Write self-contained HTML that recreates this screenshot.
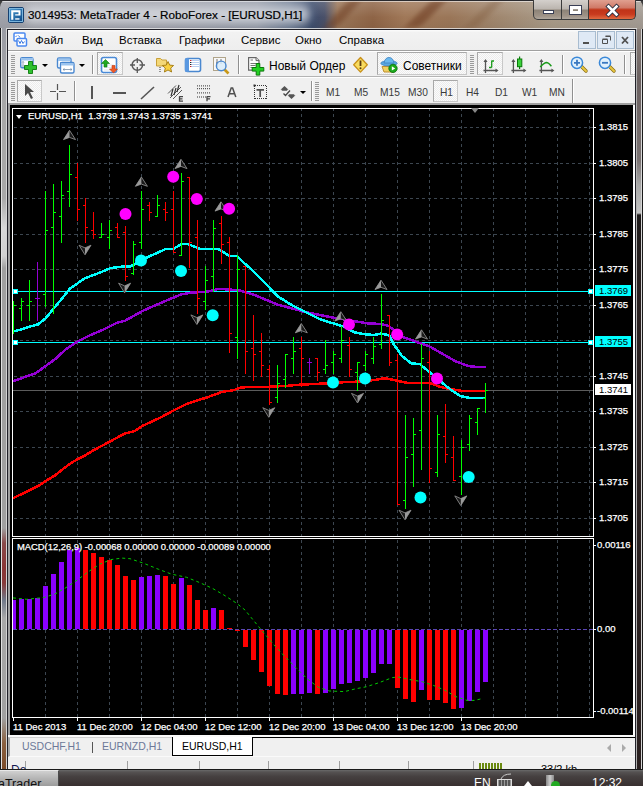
<!DOCTYPE html>
<html><head><meta charset="utf-8">
<style>
*{box-sizing:border-box}
html,body{margin:0;padding:0}
body{width:643px;height:786px;overflow:hidden;position:relative;background:#1a1a1a;font-family:"Liberation Sans",sans-serif;}
.a{position:absolute}
#title{left:0;top:0;width:643px;height:29px;border-radius:7px 7px 0 0;
 background:linear-gradient(90deg,#a0a2aa 0%,#9a9ca6 25%,#9096a4 40%,#6a7890 45%,#3c4c6c 48.5%,#4a5068 50.5%,#9a7658 52.5%,#8e6446 58%,#a07858 63%,#9a7658 70%,#a08870 78%,#a89a88 86%,#a49c94 100%);}
#title:after{content:"";position:absolute;left:0;top:0;right:0;bottom:0;background:linear-gradient(180deg,rgba(255,255,255,0.18),rgba(255,255,255,0) 60%,rgba(0,0,0,0.05));}
#glow{left:24px;top:6px;width:286px;height:17px;border-radius:8px;background:rgba(222,224,230,0.75);filter:blur(4px)}
#ttext{left:28px;top:7.5px;font-size:11.7px;color:#000;-webkit-text-stroke:0.2px #000;white-space:nowrap;}
#ficon{left:8px;top:7px;width:16px;height:16px;border-radius:2px;background:linear-gradient(180deg,#3a8ac0,#155080);border:1px solid #0c3a60}
.frame{background:linear-gradient(90deg,#2a2a2a 0,#8a8a8a 1px,#c4c4c4 3px,#9a9a9a 6px,#3a3a3a 7px)}
#client{left:7px;top:29px;width:629px;height:741px;background:#f0f0f0;border:1px solid #202028;border-bottom:none}
.caps{top:0;height:20px;border:1px solid #3b3b3b;border-top:none}
.menu{top:34px;margin-left:-1px;font-size:11.5px;color:#000;white-space:nowrap}
.tb{font-size:12px;color:#000;white-space:nowrap}
.tf{top:87px;font-size:10.2px;color:#3a3a3a;white-space:nowrap}
.sep{width:2px;background:#909090;border-right:1px solid #fff}
.grip{width:4px;background:repeating-linear-gradient(180deg,#9a9a9a 0,#9a9a9a 1px,transparent 1px,transparent 2px)}
.press{border:1px solid #c8c8c8;border-left-color:#a8a8a8;border-top-color:#a8a8a8;background:repeating-conic-gradient(#ececec 0 25%,#fbfbfb 0 50%) 0 0/2px 2px}
#chart{left:10px;top:105px;width:623px;height:630px;background:#000}
.pl{position:absolute;left:599px;font-size:9.5px;color:#fff;-webkit-text-stroke:0.25px #fff;line-height:12px;white-space:nowrap}
.plb{position:absolute;left:595px;width:36px;height:11px;font-size:9.5px;color:#000;line-height:11px;padding-left:4px;white-space:nowrap}
.tk{position:absolute;left:593px;width:3px;height:1px;background:#fff}
.dl{position:absolute;top:721px;font-size:9.5px;color:#fff;-webkit-text-stroke:0.25px #fff;line-height:12px;white-space:nowrap}
.dtk{position:absolute;top:717px;width:1px;height:4px;background:#fff}
.tab{top:740px;font-size:10.5px;white-space:nowrap}
</style></head><body>
<!-- title bar -->
<div class="a" id="title"></div>
<div class="a" style="left:336px;top:0;width:13px;height:28px;background:rgba(105,55,30,0.5);transform:skewX(-42deg);filter:blur(3px)"></div>
<div class="a" style="left:418px;top:0;width:15px;height:28px;background:rgba(105,55,30,0.55);transform:skewX(-45deg);filter:blur(3px)"></div>
<div class="a" style="left:478px;top:0;width:12px;height:28px;background:rgba(120,80,50,0.3);transform:skewX(-45deg);filter:blur(3px)"></div>
<div class="a" style="left:0;top:0;width:643px;height:1px;background:#2a2a2e"></div>
<div class="a" style="left:2px;top:1px;width:639px;height:1px;background:rgba(255,255,255,0.55)"></div>
<div class="a" style="left:6px;top:28px;width:631px;height:1px;background:rgba(235,235,235,0.8)"></div>
<div class="a" id="glow"></div>
<svg class="a" style="left:8px;top:7px" width="16" height="16"><rect x="0.5" y="0.5" width="15" height="15" rx="1.5" fill="#1e5a94" stroke="#164070"/><rect x="1.5" y="1.5" width="13" height="13" fill="none" stroke="#7ab4dc" stroke-width="1"/><rect x="2" y="2" width="12" height="12" fill="url(#fig)"/><defs><linearGradient id="fig" x1="0" y1="0" x2="1" y2="1"><stop offset="0" stop-color="#4a9ad0"/><stop offset="1" stop-color="#0e4a88"/></linearGradient></defs><path d="M3.2 3.2h9.3v5.2h-5.3v-1.2h3.3v-1.9h-5.2v7.5h-2.1z" fill="#fff"/><rect x="7.2" y="11.2" width="4.3" height="1.5" fill="#e8f0f8"/></svg>
<div class="a" id="ttext">3014953: MetaTrader 4 - RoboForex - [EURUSD,H1]</div>
<div class="a caps" style="left:533px;width:29px;border-radius:0 0 0 5px;background:linear-gradient(180deg,#d4d0cc,#bcb6b0 45%,#8e8478 55%,#a09488 85%,#b0a89e)"><div class="a" style="left:9px;top:10px;width:11px;height:4px;background:#fff;border:1px solid #3a3f55"></div></div>
<div class="a caps" style="left:561px;width:28px;background:linear-gradient(180deg,#d4d0cc,#bcb6b0 45%,#8e8478 55%,#a09488 85%,#b0a89e)"><div class="a" style="left:8px;top:6px;width:11px;height:8px;background:transparent;border:3px solid #fff;outline:1px solid #3a3f55"></div></div>
<div class="a caps" style="left:588px;width:48px;border-radius:0 0 5px 0;background:linear-gradient(180deg,#e0a090,#d07a68 40%,#c03418 52%,#c83a1e 75%,#e06a40)"><svg class="a" style="left:0;top:0" width="48" height="20"><path d="M19.5 6.5l8 8M27.5 6.5l-8 8" stroke="#2a3040" stroke-width="4.4" stroke-linecap="square"/><path d="M19.5 6.5l8 8M27.5 6.5l-8 8" stroke="#fff" stroke-width="2.6" stroke-linecap="square"/></svg></div>
<!-- frames -->
<div class="a" style="left:0;top:28px;width:7px;height:742px;background:#1a1a1a"></div>
<div class="a" style="left:1px;top:28px;width:1px;height:742px;background:#e0e0e0"></div>
<div class="a" style="left:2px;top:28px;width:4px;height:742px;background:linear-gradient(180deg,#9a9ca4 0,#a8a8a8 80px,#a8a8a8 170px,#d8d8d8 200px,#d0d0d0 228px,#a0a0a0 240px,#a0a0a0 500px,#8a4a4a 515px,#8a3636 540px,#883a3a 555px,#707888 572px,#a8a8a8 590px,#a0a0a0 690px,#8a6040 715px,#7a4a28 742px)"></div>
<div class="a" style="left:6px;top:28px;width:1px;height:742px;background:#d4d4d4"></div>
<div class="a" style="left:636px;top:29px;width:7px;height:741px;background:#1a1a1a"></div>
<div class="a" style="left:636px;top:29px;width:1px;height:741px;background:#b0b0b0"></div>
<div class="a" style="left:637px;top:29px;width:4px;height:741px;background:linear-gradient(180deg,#8a807a 0,#6a6060 51px,#7a7272 131px,#a8a8a8 156px,#c4c4c4 184px,#1e1a1a 186px,#2a2020 291px,#2a2020 741px)"></div>
<div class="a" style="left:641px;top:29px;width:1px;height:741px;background:#d8d8d8"></div>
<!-- client -->
<div class="a" id="client"></div>
<!-- menu -->
<div class="a" style="left:8px;top:30px;width:627px;height:20px;background:linear-gradient(180deg,#fafafa 0,#fafafa 1px,#f2f2f2 2px,#eeeeee)"></div>
<svg class="a" style="left:8px;top:29px" width="24" height="22"><rect x="6" y="4" width="11" height="8" rx="1" fill="#fff" stroke="#4a88f0" stroke-width="1.5"/><path d="M7.5 8l1.5-1.5M10.5 6.5l1.5 2" stroke="#3a78e0" stroke-width="1"/><rect x="9" y="9.5" width="9.5" height="7.5" rx="1" fill="#fff" stroke="#4a88f0" stroke-width="1.5"/><path d="M10.5 11.5l1.5 3 1.5-3 1.5 3 1.5-2" stroke="#3a78e0" stroke-width="1" fill="none"/></svg>
<div class="a menu" style="left:36px">Файл</div>
<div class="a menu" style="left:83px">Вид</div>
<div class="a menu" style="left:120px">Вставка</div>
<div class="a menu" style="left:180px">Графики</div>
<div class="a menu" style="left:242px">Сервис</div>
<div class="a menu" style="left:296px">Окно</div>
<div class="a menu" style="left:340px">Справка</div>
<div class="a" style="left:578px;top:31px;width:18px;height:18px;border:1px solid #a8bcd0;background:#dfe9f5"></div>
<div class="a" style="left:597px;top:31px;width:18px;height:18px;border:1px solid #a8bcd0;background:#dfe9f5"></div>
<div class="a" style="left:616px;top:31px;width:18px;height:18px;border:1px solid #a8bcd0;background:#dfe9f5"></div>
<svg class="a" style="left:578px;top:31px" width="56" height="18"><rect x="5" y="11" width="6" height="2" fill="#505050"/><path d="M27.5 5.5h5v4M24.5 8.5h5v4h-5z" stroke="#505050" stroke-width="1" fill="none"/><path d="M24.5 8h5M27.5 5h5" stroke="#505050" stroke-width="1"/><path d="M44 6l6 6.5M50 6l-6 6.5" stroke="#505050" stroke-width="1.8"/></svg>
<!-- toolbar lines -->
<div class="a" style="left:8px;top:50px;width:627px;height:1px;background:#a0a0a0"></div>
<div class="a" style="left:8px;top:51px;width:627px;height:1px;background:#ffffff"></div>
<div class="a" style="left:8px;top:76px;width:627px;height:1px;background:#b4b4b4"></div>
<div class="a" style="left:8px;top:77px;width:627px;height:1px;background:#ffffff"></div>
<div class="a" style="left:8px;top:103px;width:627px;height:1px;background:#a0a0a0"></div>
<!-- toolbar 1 -->
<div class="a grip" style="left:11px;top:55px;height:19px"></div>
<svg class="a" style="left:14px;top:50px" width="80" height="28">
<rect x="6.7" y="7.7" width="12.3" height="10" rx="1.5" fill="#fff" stroke="#4a88d0" stroke-width="1.4"/>
<rect x="7" y="8" width="12" height="2.5" fill="#9cc4ee"/>
<path d="M9 11.5v5M8 12.5l1-1 1 1M8 15.5l1 1 1-1" stroke="#7a90aa" stroke-width="0.8" fill="none"/>
<path d="M14.5 11.5h4v4h4v4h-4v4h-4v-4h-4v-4h4z" fill="#2ec02e" stroke="#0a7a0a" stroke-width="0.9"/>
<rect x="43.5" y="8" width="13.5" height="10" rx="1.5" fill="#fff" stroke="#4a88d0" stroke-width="1.4"/>
<rect x="44" y="8.5" width="12.5" height="2.5" fill="#9cc4ee"/>
<path d="M46.5 12v4M46 16h8M52.5 15l1.5 1-1.5 1" stroke="#7a90aa" stroke-width="0.8" fill="none"/>
<rect x="46.5" y="12.5" width="13.5" height="10.5" rx="1.5" fill="#fff" stroke="#4a88d0" stroke-width="1.4"/>
<rect x="47" y="13" width="12.5" height="2.5" fill="#9cc4ee"/>
<path d="M49 19.5h9M50.5 18.5l-1.5 1 1.5 1M56.5 18.5l1.5 1-1.5 1" stroke="#7a90aa" stroke-width="0.8" fill="none"/>
</svg>
<div class="a" style="left:42px;top:64px;width:0;height:0;border-left:3px solid transparent;border-right:3px solid transparent;border-top:3px solid #000"></div>
<div class="a" style="left:79px;top:64px;width:0;height:0;border-left:3px solid transparent;border-right:3px solid transparent;border-top:3px solid #000"></div>
<div class="a sep" style="left:92px;top:55px;height:19px"></div>
<div class="a press" style="left:97px;top:52px;width:26px;height:23px"></div>
<svg class="a" style="left:96px;top:50px" width="140" height="28">
<rect x="5.5" y="7.5" width="15" height="15" rx="2" fill="#fff" stroke="#4a8ad6" stroke-width="1.6"/>
<path d="M8 15h10M8 17.5h10M8 20h10" stroke="#dde6f0" stroke-width="1"/>
<path d="M9.5 9.5 L5.5 13.5 H8 V17 H11 V13.5 H13.5 Z" fill="#22a822" stroke="#0a7a0a" stroke-width="0.6"/>
<path d="M17.5 23 L21.5 19 H19 V15.5 H16 V19 H13.5 Z" fill="#f05a28" stroke="#c03a10" stroke-width="0.6"/>
<circle cx="41.3" cy="15" r="5.2" fill="none" stroke="#5a5a5a" stroke-width="1.5"/>
<path d="M41.3 8v5M41.3 17v6M34 15h5M43.5 15h5.5" stroke="#5a5a5a" stroke-width="1.3"/>
<path d="M60.5 8.5h4l1.5 1.5h4.5v6h-10z" fill="#f4d878" stroke="#c8a038" stroke-width="1"/>
<path d="M64 17v6" stroke="#333" stroke-width="1" stroke-dasharray="1 1"/>
<path d="M72 11.5l1.7 3.6 3.9.4-2.9 2.6.9 3.9-3.6-2-3.6 2 .9-3.9-2.9-2.6 3.9-.4z" fill="#f8d040" stroke="#a07810" stroke-width="0.9"/>
<rect x="89.5" y="8.5" width="15" height="13" rx="2" fill="#fff" stroke="#4a88d0" stroke-width="1.6"/>
<rect x="89" y="8" width="4" height="14" rx="1.5" fill="#5a98e0"/>
<path d="M95 10.5h8M95 12.5h8M95 14.5h8M95 16.5h8" stroke="#b8cef0" stroke-width="1"/>
<path d="M94 10.5h1.3M94 16.5h1.3" stroke="#e02020" stroke-width="1.2"/>
<path d="M94 12.5h1.3M94 14.5h1.3" stroke="#222" stroke-width="1.2"/>
<rect x="117.5" y="7.5" width="12" height="13" fill="#f8f8f8" stroke="#b0a48a" stroke-width="1"/>
<path d="M121 9v8M120 13h3M125 9v5" stroke="#555" stroke-width="0.8"/>
<path d="M128.5 19.5l4 4" stroke="#c89818" stroke-width="2.6"/>
<circle cx="125.2" cy="15.9" r="4.8" fill="#d8ecfa" fill-opacity="0.85" stroke="#4a88d0" stroke-width="1.4"/>
</svg>
<div class="a sep" style="left:238px;top:55px;height:19px"></div>
<svg class="a" style="left:244px;top:52px" width="26" height="24"><path d="M4.6 5.6h7.4l3 3v9.6h-10.4z" fill="#fff" stroke="#666" stroke-width="1.2"/><path d="M12 5.6v3h3" fill="#ddd" stroke="#666" stroke-width="1"/><path d="M6.5 8h2.5M6.5 11.5h6M6.5 13.5h5M6.5 15.5h3" stroke="#777" stroke-width="1"/><path d="M12.2 11.5h3.6v4h4v3.6h-4v4h-3.6v-4h-4v-3.6h4z" fill="#22d022" stroke="#0a780a" stroke-width="1"/></svg>
<div class="a tb" style="left:269px;top:59px">Новый Ордер</div>
<svg class="a" style="left:348px;top:52px" width="24" height="24"><path d="M12.5 5.5l6.8 7.3-6.8 7.3-6.8-7.3z" fill="#f8dc60" stroke="#c8901a" stroke-width="1.3" stroke-linejoin="round"/><path d="M12.5 8.5v5.5" stroke="#5a3a10" stroke-width="1.8"/><circle cx="12.5" cy="16.3" r="1" fill="#5a3a10"/></svg>
<div class="a press" style="left:377px;top:52px;width:90px;height:23px"></div>
<svg class="a" style="left:378px;top:52px" width="24" height="24"><path d="M4 14.5h13l-2 5.5h-9z" fill="#f0d060" stroke="#c09030" stroke-width="1"/><ellipse cx="11" cy="11.3" rx="8.2" ry="2.6" fill="#5aa8e0" stroke="#3a80c0" stroke-width="0.8"/><path d="M6 11 Q7 5.5 11 5.5 Q15 5.5 16 11z" fill="#6ab8ee" stroke="#3a80c0" stroke-width="0.8"/><circle cx="15" cy="16.4" r="4.2" fill="#1aa81a" stroke="#0a700a" stroke-width="0.8"/><path d="M13.8 14.2v4.4l3.4-2.2z" fill="#fff"/></svg>
<div class="a tb" style="left:403px;top:59px">Советники</div>
<div class="a grip" style="left:470px;top:55px;height:19px"></div>
<div class="a press" style="left:477px;top:52px;width:26px;height:23px"></div>
<svg class="a" style="left:478px;top:54px" width="80" height="22"><path d="M7.5 6v13M5.5 16.5h13" stroke="#555" stroke-width="1.3" fill="none"/><path d="M5.5 8l2-3 2 3zM17.5 14.5l3 2-3 2z" fill="#555"/><path d="M13.7 6.5v7M13.7 7h2.3M11 13.5h2.7" stroke="#1a9a1a" stroke-width="1.3" fill="none"/><path d="M35.4 6v13M33.4 16.5h13" stroke="#555" stroke-width="1.3" fill="none"/><path d="M33.4 8l2-3 2 3zM45.4 14.5l3 2-3 2z" fill="#555"/><path d="M41.6 2.5v12.5" stroke="#0a7a0a" stroke-width="1.2"/><rect x="39.5" y="5" width="4.3" height="7.7" fill="#3ad03a" stroke="#0a7a0a" stroke-width="1"/><path d="M63.4 6v13M61.4 16.5h13" stroke="#555" stroke-width="1.3" fill="none"/><path d="M61.4 8l2-3 2 3zM73.4 14.5l3 2-3 2z" fill="#555"/><path d="M62.2 13 Q66 9 68.2 8.5 Q70.5 8.5 73.4 12.2" stroke="#1a9a1a" stroke-width="1.4" fill="none"/></svg>
<div class="a sep" style="left:562px;top:55px;height:19px"></div>
<svg class="a" style="left:560px;top:50px" width="70" height="28"><path d="M21.5 16.5l4.5 4.5" stroke="#8a6a10" stroke-width="3.4" stroke-linecap="round"/><path d="M21.5 16.5l4.5 4.5" stroke="#e8c840" stroke-width="2" stroke-linecap="round"/><circle cx="17" cy="12.8" r="5.6" fill="#e0f0fc" stroke="#3a88d8" stroke-width="1.5"/><path d="M14 12.8h6M17 9.8v6" stroke="#3a78c0" stroke-width="1.8"/>
<path d="M49.5 16.5l4.5 4.5" stroke="#8a6a10" stroke-width="3.4" stroke-linecap="round"/><path d="M49.5 16.5l4.5 4.5" stroke="#e8c840" stroke-width="2" stroke-linecap="round"/><circle cx="45" cy="12.8" r="5.6" fill="#e0f0fc" stroke="#3a88d8" stroke-width="1.5"/><path d="M42 12.8h6" stroke="#3a78c0" stroke-width="1.8"/></svg>
<div class="a sep" style="left:624px;top:55px;height:19px"></div>
<div class="a press" style="left:630px;top:52px;width:5px;height:23px;border-right:none"></div>
<!-- toolbar 2 -->
<div class="a grip" style="left:11px;top:82px;height:19px"></div>
<div class="a press" style="left:17px;top:80px;width:25px;height:22px"></div>
<svg class="a" style="left:24px;top:84px" width="12" height="16"><path d="M1 0 L1 12 L4 9 L7 15 L9 14 L6 8 L10 8 Z" fill="#4a4a4a"/></svg>
<svg class="a" style="left:49px;top:83px" width="18" height="18"><path d="M8.5 1v6M8.5 10v7M1 8.5h6M10 8.5h7" stroke="#555" stroke-width="1.2" fill="none"/></svg>
<div class="a sep" style="left:74px;top:81px;height:20px"></div>
<div class="a" style="left:91px;top:86px;width:1.5px;height:13px;background:#555"></div>
<div class="a" style="left:113px;top:92px;width:13px;height:1.5px;background:#555"></div>
<svg class="a" style="left:140px;top:86px" width="16" height="14"><path d="M1 13 L14 1" stroke="#555" stroke-width="1.6"/></svg>
<svg class="a" style="left:164px;top:80px" width="24" height="24"><path d="M4 13.5 L12 5.5 M6 18 L17 7 M9 19 L18 10" stroke="#555" stroke-width="1" fill="none"/><path d="M7 16 L9 9 M10 15 L12 8 M13 12 L15 5" stroke="#333" stroke-width="1.2" fill="none"/><path d="M15.5 16.2v5h3.5 M15.5 16.7h3.5 M15.5 18.9h3" stroke="#444" stroke-width="1.3" fill="none"/></svg>
<svg class="a" style="left:164px;top:80px" width="50" height="24"><path d="M33 5.9 H46 M33 8.7 H46 M33 12.9 H46 M33 17 H42" stroke="#333" stroke-width="1" stroke-dasharray="1 1" fill="none"/><path d="M43 16.2v5 M43 16.7h3.5 M43 18.9h3" stroke="#444" stroke-width="1.3" fill="none"/></svg>
<svg class="a" style="left:222px;top:82px" width="50" height="20"><path d="M6 15 L9.2 6 H10.6 L13.8 15 M7.2 11.8 H12.6" stroke="#505050" stroke-width="1.5" fill="none"/><path d="M33 3.5 H45 M33 16.5 H45 M32.5 4 V17 M44.5 4 V17" stroke="#333" stroke-width="1" stroke-dasharray="1 1" fill="none" shape-rendering="crispEdges"/><rect x="31.5" y="2.5" width="2" height="2" fill="#333"/><path d="M34.5 7.8 H42 M38.2 7.8 V15" stroke="#505050" stroke-width="1.7" fill="none"/></svg>
<svg class="a" style="left:276px;top:80px" width="24" height="22"><path d="M8.5 6 L12.5 9.8 H11.2 V10.8 H5.8 V9.8 H4.5 Z" fill="#555"/><path d="M7.5 13.5 L9.5 15.5 L14 10.5" stroke="#444" stroke-width="1.3" fill="none"/><path d="M15.5 19 L19.5 15.2 H18.2 V14.2 H12.8 V15.2 H11.5 Z" fill="#555"/></svg>
<div class="a" style="left:300px;top:91px;width:0;height:0;border-left:3px solid transparent;border-right:3px solid transparent;border-top:3px solid #000"></div>
<div class="a sep" style="left:311px;top:81px;height:20px"></div>
<div class="a grip" style="left:315px;top:82px;height:19px"></div>
<div class="a tf" style="left:326px">M1</div>
<div class="a tf" style="left:354px">M5</div>
<div class="a tf" style="left:380px">M15</div>
<div class="a tf" style="left:408px">M30</div>
<div class="a press" style="left:433px;top:80px;width:25px;height:22px"></div>
<div class="a tf" style="left:440px">H1</div>
<div class="a tf" style="left:466px">H4</div>
<div class="a tf" style="left:495px">D1</div>
<div class="a tf" style="left:522px">W1</div>
<div class="a tf" style="left:549px">MN</div>
<div class="a sep" style="left:572px;top:79px;height:24px"></div>
<!-- chart -->
<div class="a" style="left:8px;top:104px;width:627px;height:633px;background:#fff;border-left:2px solid #a0a0a0;border-top:1px solid #a0a0a0"></div>
<div class="a" id="chart"></div>
<svg class="a" style="left:0;top:0" width="643" height="786" shape-rendering="auto">
<rect x="12.5" y="108.5" width="581" height="428" fill="none" stroke="#fff" stroke-width="1"/>
<rect x="12.5" y="538.5" width="581" height="179" fill="none" stroke="#fff" stroke-width="1"/>
<clipPath id="cm"><rect x="13" y="109" width="580" height="427"/></clipPath>
<clipPath id="cs"><rect x="13" y="539" width="580" height="178"/></clipPath>
<g clip-path="url(#cm)">
<line x1="14" y1="127.5" x2="593" y2="127.5" stroke="#3c4650" stroke-dasharray="3 3"/>
<line x1="14" y1="163.5" x2="593" y2="163.5" stroke="#3c4650" stroke-dasharray="3 3"/>
<line x1="14" y1="198.5" x2="593" y2="198.5" stroke="#3c4650" stroke-dasharray="3 3"/>
<line x1="14" y1="234.5" x2="593" y2="234.5" stroke="#3c4650" stroke-dasharray="3 3"/>
<line x1="14" y1="269.5" x2="593" y2="269.5" stroke="#3c4650" stroke-dasharray="3 3"/>
<line x1="14" y1="305.5" x2="593" y2="305.5" stroke="#3c4650" stroke-dasharray="3 3"/>
<line x1="14" y1="340.5" x2="593" y2="340.5" stroke="#3c4650" stroke-dasharray="3 3"/>
<line x1="14" y1="376.5" x2="593" y2="376.5" stroke="#3c4650" stroke-dasharray="3 3"/>
<line x1="14" y1="411.5" x2="593" y2="411.5" stroke="#3c4650" stroke-dasharray="3 3"/>
<line x1="14" y1="447.5" x2="593" y2="447.5" stroke="#3c4650" stroke-dasharray="3 3"/>
<line x1="14" y1="482.5" x2="593" y2="482.5" stroke="#3c4650" stroke-dasharray="3 3"/>
<line x1="14" y1="518.5" x2="593" y2="518.5" stroke="#3c4650" stroke-dasharray="3 3"/>
<line x1="45.5" y1="108" x2="45.5" y2="536" stroke="#3c4650" stroke-dasharray="3 3"/>
<line x1="77.5" y1="108" x2="77.5" y2="536" stroke="#3c4650" stroke-dasharray="3 3"/>
<line x1="109.5" y1="108" x2="109.5" y2="536" stroke="#3c4650" stroke-dasharray="3 3"/>
<line x1="141.5" y1="108" x2="141.5" y2="536" stroke="#3c4650" stroke-dasharray="3 3"/>
<line x1="173.5" y1="108" x2="173.5" y2="536" stroke="#3c4650" stroke-dasharray="3 3"/>
<line x1="205.5" y1="108" x2="205.5" y2="536" stroke="#3c4650" stroke-dasharray="3 3"/>
<line x1="237.5" y1="108" x2="237.5" y2="536" stroke="#3c4650" stroke-dasharray="3 3"/>
<line x1="269.5" y1="108" x2="269.5" y2="536" stroke="#3c4650" stroke-dasharray="3 3"/>
<line x1="301.5" y1="108" x2="301.5" y2="536" stroke="#3c4650" stroke-dasharray="3 3"/>
<line x1="333.5" y1="108" x2="333.5" y2="536" stroke="#3c4650" stroke-dasharray="3 3"/>
<line x1="365.5" y1="108" x2="365.5" y2="536" stroke="#3c4650" stroke-dasharray="3 3"/>
<line x1="397.5" y1="108" x2="397.5" y2="536" stroke="#3c4650" stroke-dasharray="3 3"/>
<line x1="429.5" y1="108" x2="429.5" y2="536" stroke="#3c4650" stroke-dasharray="3 3"/>
<line x1="461.5" y1="108" x2="461.5" y2="536" stroke="#3c4650" stroke-dasharray="3 3"/>
<line x1="493.5" y1="108" x2="493.5" y2="536" stroke="#3c4650" stroke-dasharray="3 3"/>
<line x1="525.5" y1="108" x2="525.5" y2="536" stroke="#3c4650" stroke-dasharray="3 3"/>
<line x1="557.5" y1="108" x2="557.5" y2="536" stroke="#3c4650" stroke-dasharray="3 3"/>
<line x1="589.5" y1="108" x2="589.5" y2="536" stroke="#3c4650" stroke-dasharray="3 3"/>
<rect x="13" y="291" width="580" height="1" fill="#00ffff"/>
<rect x="13" y="342" width="580" height="1" fill="#00ffff"/>
<rect x="13" y="289" width="5" height="5" fill="#00ffff"/><rect x="14" y="290" width="3" height="3" fill="#ffffff"/>
<rect x="588" y="289" width="5" height="5" fill="#00ffff"/><rect x="589" y="290" width="3" height="3" fill="#ffffff"/>
<rect x="13" y="340" width="5" height="5" fill="#00ffff"/><rect x="14" y="341" width="3" height="3" fill="#ffffff"/>
<rect x="588" y="340" width="5" height="5" fill="#00ffff"/><rect x="589" y="341" width="3" height="3" fill="#ffffff"/>
<rect x="13" y="390" width="580" height="1" fill="#5c5c5c"/>
<polyline points="10,499.5 13.5,497.9 24,493 38,486 45,481.5 54.8,475.5 63.2,468.9 70.2,463.6 77.2,459.4 85.6,455.2 92.6,450.7 100,446.8 108.7,442.2 124.8,433.5 134.8,431 142.2,426 159.7,417.9 174.6,409.9 184.5,404.9 194.5,401.2 206.9,397.5 221.8,392 234.3,390 240,387.7 249.3,386.8 268,386.8 286.7,385.9 296,384.9 314.7,384 333.3,383 344.5,382.1 360,381.6 373.7,380.1 384.9,378.2 394.2,380.1 407.3,382.9 429.7,382.9 440,386.8 445.6,388.2 461.5,390.9 485.2,390.9" fill="none" stroke="#ff0000" stroke-width="2.5" stroke-linejoin="round" shape-rendering="crispEdges"/>
<polyline points="10,382.4 36,373 54.8,359.4 66,349.2 77.2,341.7 90.3,335.2 103.3,329.6 116.4,323 125,320.7 143.7,310.4 166,300.7 181,294.5 190.3,292.7 207.1,291.7 218.3,288.9 229.5,289.5 240,290.5 254.9,295.2 277.3,304.5 305.3,312 333.3,317.6 355,321.3 366.2,323.2 381.1,324.1 388.6,326 403.5,337.2 416.6,341.9 429.7,346.5 442.7,354 455.8,361.5 468.8,366.1 477.3,367 485.7,367" fill="none" stroke="#9400d3" stroke-width="2.5" stroke-linejoin="round" shape-rendering="crispEdges"/>
<polyline points="13,331.5 21.2,329.6 28.7,326.8 38,324.4 45.5,318.4 54.8,307.2 64.1,296 69.7,288.9 84.7,278.3 99.6,272.7 110.8,268 122,266.7 130,266.5 141.8,260.5 149.3,256.4 166,248.9 173.5,248.9 181,244.2 188.5,244.2 199.7,248.9 218.3,248.9 229.5,256 237,256 245,263.8 251.2,269 266.1,284 277.3,296.1 292.3,305.4 305.3,312 320.3,319.4 343.3,326.4 355,332.5 366,334.4 374,335 381,333.5 389,335.3 394,344.7 402,356 411,363.3 420,364.2 430,372.6 439,380 448,387.6 460,396 470,398 485,398" fill="none" stroke="#00ffff" stroke-width="2.5" stroke-linejoin="round" shape-rendering="crispEdges"/>
<rect x="13" y="301" width="1" height="33" fill="#00ff00"/>
<rect x="11" y="320" width="2" height="1" fill="#00ff00"/>
<rect x="14" y="305" width="2" height="1" fill="#00ff00"/>
<rect x="21" y="298" width="1" height="23" fill="#00ff00"/>
<rect x="19" y="308" width="2" height="1" fill="#00ff00"/>
<rect x="22" y="301" width="2" height="1" fill="#00ff00"/>
<rect x="29" y="280" width="1" height="41" fill="#00ff00"/>
<rect x="27" y="305" width="2" height="1" fill="#00ff00"/>
<rect x="30" y="301" width="2" height="1" fill="#00ff00"/>
<rect x="37" y="262" width="1" height="59" fill="#9400d3"/>
<rect x="35" y="298" width="2" height="1" fill="#9400d3"/>
<rect x="38" y="298" width="2" height="1" fill="#9400d3"/>
<rect x="45" y="191" width="1" height="116" fill="#00ff00"/>
<rect x="43" y="294" width="2" height="1" fill="#00ff00"/>
<rect x="46" y="230" width="2" height="1" fill="#00ff00"/>
<rect x="53" y="184" width="1" height="130" fill="#00ff00"/>
<rect x="51" y="227" width="2" height="1" fill="#00ff00"/>
<rect x="54" y="212" width="2" height="1" fill="#00ff00"/>
<rect x="61" y="181" width="1" height="62" fill="#00ff00"/>
<rect x="59" y="216" width="2" height="1" fill="#00ff00"/>
<rect x="62" y="195" width="2" height="1" fill="#00ff00"/>
<rect x="69" y="145" width="1" height="62" fill="#00ff00"/>
<rect x="67" y="191" width="2" height="1" fill="#00ff00"/>
<rect x="70" y="174" width="2" height="1" fill="#00ff00"/>
<rect x="77" y="163" width="1" height="58" fill="#ff0000"/>
<rect x="75" y="177" width="2" height="1" fill="#ff0000"/>
<rect x="78" y="209" width="2" height="1" fill="#ff0000"/>
<rect x="85" y="198" width="1" height="45" fill="#ff0000"/>
<rect x="83" y="205" width="2" height="1" fill="#ff0000"/>
<rect x="86" y="227" width="2" height="1" fill="#ff0000"/>
<rect x="93" y="212" width="1" height="27" fill="#ff0000"/>
<rect x="91" y="230" width="2" height="1" fill="#ff0000"/>
<rect x="94" y="234" width="2" height="1" fill="#ff0000"/>
<rect x="101" y="223" width="1" height="15" fill="#00ff00"/>
<rect x="99" y="237" width="2" height="1" fill="#00ff00"/>
<rect x="102" y="234" width="2" height="1" fill="#00ff00"/>
<rect x="109" y="220" width="1" height="29" fill="#00ff00"/>
<rect x="107" y="237" width="2" height="1" fill="#00ff00"/>
<rect x="110" y="230" width="2" height="1" fill="#00ff00"/>
<rect x="117" y="223" width="1" height="15" fill="#ff0000"/>
<rect x="115" y="227" width="2" height="1" fill="#ff0000"/>
<rect x="118" y="237" width="2" height="1" fill="#ff0000"/>
<rect x="125" y="226" width="1" height="55" fill="#ff0000"/>
<rect x="123" y="232" width="2" height="1" fill="#ff0000"/>
<rect x="126" y="276" width="2" height="1" fill="#ff0000"/>
<rect x="133" y="241" width="1" height="34" fill="#00ff00"/>
<rect x="131" y="273" width="2" height="1" fill="#00ff00"/>
<rect x="134" y="244" width="2" height="1" fill="#00ff00"/>
<rect x="141" y="191" width="1" height="58" fill="#00ff00"/>
<rect x="139" y="242" width="2" height="1" fill="#00ff00"/>
<rect x="142" y="209" width="2" height="1" fill="#00ff00"/>
<rect x="149" y="202" width="1" height="19" fill="#ff0000"/>
<rect x="147" y="205" width="2" height="1" fill="#ff0000"/>
<rect x="150" y="212" width="2" height="1" fill="#ff0000"/>
<rect x="157" y="195" width="1" height="22" fill="#00ff00"/>
<rect x="155" y="216" width="2" height="1" fill="#00ff00"/>
<rect x="158" y="205" width="2" height="1" fill="#00ff00"/>
<rect x="165" y="202" width="1" height="19" fill="#ff0000"/>
<rect x="163" y="209" width="2" height="1" fill="#ff0000"/>
<rect x="166" y="212" width="2" height="1" fill="#ff0000"/>
<rect x="173" y="191" width="1" height="62" fill="#ff0000"/>
<rect x="171" y="209" width="2" height="1" fill="#ff0000"/>
<rect x="174" y="252" width="2" height="1" fill="#ff0000"/>
<rect x="181" y="173" width="1" height="83" fill="#00ff00"/>
<rect x="179" y="255" width="2" height="1" fill="#00ff00"/>
<rect x="182" y="181" width="2" height="1" fill="#00ff00"/>
<rect x="189" y="177" width="1" height="91" fill="#ff0000"/>
<rect x="187" y="177" width="2" height="1" fill="#ff0000"/>
<rect x="190" y="242" width="2" height="1" fill="#ff0000"/>
<rect x="197" y="220" width="1" height="94" fill="#ff0000"/>
<rect x="195" y="237" width="2" height="1" fill="#ff0000"/>
<rect x="198" y="298" width="2" height="1" fill="#ff0000"/>
<rect x="205" y="266" width="1" height="44" fill="#00ff00"/>
<rect x="203" y="301" width="2" height="1" fill="#00ff00"/>
<rect x="206" y="280" width="2" height="1" fill="#00ff00"/>
<rect x="213" y="220" width="1" height="72" fill="#00ff00"/>
<rect x="211" y="276" width="2" height="1" fill="#00ff00"/>
<rect x="214" y="228" width="2" height="1" fill="#00ff00"/>
<rect x="221" y="216" width="1" height="48" fill="#ff0000"/>
<rect x="219" y="223" width="2" height="1" fill="#ff0000"/>
<rect x="222" y="244" width="2" height="1" fill="#ff0000"/>
<rect x="229" y="237" width="1" height="116" fill="#ff0000"/>
<rect x="227" y="242" width="2" height="1" fill="#ff0000"/>
<rect x="230" y="333" width="2" height="1" fill="#ff0000"/>
<rect x="237" y="255" width="1" height="104" fill="#00ff00"/>
<rect x="235" y="337" width="2" height="1" fill="#00ff00"/>
<rect x="238" y="269" width="2" height="1" fill="#00ff00"/>
<rect x="245" y="266" width="1" height="108" fill="#ff0000"/>
<rect x="243" y="266" width="2" height="1" fill="#ff0000"/>
<rect x="246" y="351" width="2" height="1" fill="#ff0000"/>
<rect x="253" y="315" width="1" height="66" fill="#ff0000"/>
<rect x="251" y="348" width="2" height="1" fill="#ff0000"/>
<rect x="254" y="354" width="2" height="1" fill="#ff0000"/>
<rect x="261" y="333" width="1" height="44" fill="#ff0000"/>
<rect x="259" y="351" width="2" height="1" fill="#ff0000"/>
<rect x="262" y="365" width="2" height="1" fill="#ff0000"/>
<rect x="269" y="365" width="1" height="40" fill="#ff0000"/>
<rect x="267" y="369" width="2" height="1" fill="#ff0000"/>
<rect x="270" y="402" width="2" height="1" fill="#ff0000"/>
<rect x="277" y="365" width="1" height="38" fill="#00ff00"/>
<rect x="275" y="397" width="2" height="1" fill="#00ff00"/>
<rect x="278" y="383" width="2" height="1" fill="#00ff00"/>
<rect x="285" y="354" width="1" height="34" fill="#00ff00"/>
<rect x="283" y="379" width="2" height="1" fill="#00ff00"/>
<rect x="286" y="354" width="2" height="1" fill="#00ff00"/>
<rect x="293" y="337" width="1" height="37" fill="#00ff00"/>
<rect x="291" y="358" width="2" height="1" fill="#00ff00"/>
<rect x="294" y="351" width="2" height="1" fill="#00ff00"/>
<rect x="301" y="337" width="1" height="50" fill="#ff0000"/>
<rect x="299" y="348" width="2" height="1" fill="#ff0000"/>
<rect x="302" y="358" width="2" height="1" fill="#ff0000"/>
<rect x="309" y="358" width="1" height="16" fill="#9400d3"/>
<rect x="307" y="362" width="2" height="1" fill="#9400d3"/>
<rect x="310" y="362" width="2" height="1" fill="#9400d3"/>
<rect x="317" y="358" width="1" height="23" fill="#ff0000"/>
<rect x="315" y="358" width="2" height="1" fill="#ff0000"/>
<rect x="318" y="372" width="2" height="1" fill="#ff0000"/>
<rect x="325" y="340" width="1" height="34" fill="#00ff00"/>
<rect x="323" y="369" width="2" height="1" fill="#00ff00"/>
<rect x="326" y="365" width="2" height="1" fill="#00ff00"/>
<rect x="333" y="351" width="1" height="23" fill="#00ff00"/>
<rect x="331" y="362" width="2" height="1" fill="#00ff00"/>
<rect x="334" y="354" width="2" height="1" fill="#00ff00"/>
<rect x="341" y="326" width="1" height="37" fill="#00ff00"/>
<rect x="339" y="358" width="2" height="1" fill="#00ff00"/>
<rect x="342" y="340" width="2" height="1" fill="#00ff00"/>
<rect x="349" y="337" width="1" height="40" fill="#ff0000"/>
<rect x="347" y="345" width="2" height="1" fill="#ff0000"/>
<rect x="350" y="369" width="2" height="1" fill="#ff0000"/>
<rect x="357" y="362" width="1" height="29" fill="#00ff00"/>
<rect x="355" y="372" width="2" height="1" fill="#00ff00"/>
<rect x="358" y="362" width="2" height="1" fill="#00ff00"/>
<rect x="365" y="351" width="1" height="20" fill="#00ff00"/>
<rect x="363" y="365" width="2" height="1" fill="#00ff00"/>
<rect x="366" y="354" width="2" height="1" fill="#00ff00"/>
<rect x="373" y="337" width="1" height="27" fill="#00ff00"/>
<rect x="371" y="358" width="2" height="1" fill="#00ff00"/>
<rect x="374" y="346" width="2" height="1" fill="#00ff00"/>
<rect x="381" y="294" width="1" height="55" fill="#00ff00"/>
<rect x="379" y="344" width="2" height="1" fill="#00ff00"/>
<rect x="382" y="320" width="2" height="1" fill="#00ff00"/>
<rect x="389" y="315" width="1" height="51" fill="#ff0000"/>
<rect x="387" y="315" width="2" height="1" fill="#ff0000"/>
<rect x="390" y="362" width="2" height="1" fill="#ff0000"/>
<rect x="397" y="354" width="1" height="151" fill="#ff0000"/>
<rect x="395" y="360" width="2" height="1" fill="#ff0000"/>
<rect x="398" y="504" width="2" height="1" fill="#ff0000"/>
<rect x="405" y="415" width="1" height="94" fill="#00ff00"/>
<rect x="403" y="500" width="2" height="1" fill="#00ff00"/>
<rect x="406" y="457" width="2" height="1" fill="#00ff00"/>
<rect x="413" y="418" width="1" height="69" fill="#00ff00"/>
<rect x="411" y="454" width="2" height="1" fill="#00ff00"/>
<rect x="414" y="434" width="2" height="1" fill="#00ff00"/>
<rect x="421" y="344" width="1" height="126" fill="#00ff00"/>
<rect x="419" y="430" width="2" height="1" fill="#00ff00"/>
<rect x="422" y="358" width="2" height="1" fill="#00ff00"/>
<rect x="429" y="351" width="1" height="132" fill="#ff0000"/>
<rect x="427" y="362" width="2" height="1" fill="#ff0000"/>
<rect x="430" y="468" width="2" height="1" fill="#ff0000"/>
<rect x="437" y="415" width="1" height="62" fill="#00ff00"/>
<rect x="435" y="472" width="2" height="1" fill="#00ff00"/>
<rect x="438" y="434" width="2" height="1" fill="#00ff00"/>
<rect x="445" y="404" width="1" height="59" fill="#ff0000"/>
<rect x="443" y="436" width="2" height="1" fill="#ff0000"/>
<rect x="446" y="454" width="2" height="1" fill="#ff0000"/>
<rect x="453" y="436" width="1" height="45" fill="#ff0000"/>
<rect x="451" y="457" width="2" height="1" fill="#ff0000"/>
<rect x="454" y="480" width="2" height="1" fill="#ff0000"/>
<rect x="461" y="440" width="1" height="55" fill="#00ff00"/>
<rect x="459" y="476" width="2" height="1" fill="#00ff00"/>
<rect x="462" y="447" width="2" height="1" fill="#00ff00"/>
<rect x="469" y="415" width="1" height="36" fill="#00ff00"/>
<rect x="467" y="444" width="2" height="1" fill="#00ff00"/>
<rect x="470" y="418" width="2" height="1" fill="#00ff00"/>
<rect x="477" y="408" width="1" height="27" fill="#00ff00"/>
<rect x="475" y="422" width="2" height="1" fill="#00ff00"/>
<rect x="478" y="408" width="2" height="1" fill="#00ff00"/>
<rect x="485" y="383" width="1" height="30" fill="#00ff00"/>
<rect x="483" y="398" width="2" height="1" fill="#00ff00"/>
<rect x="486" y="390" width="2" height="1" fill="#00ff00"/>
<polygon points="69.5,130.3 75.5,139.6 69.5,137.4 63.5,139.6" fill="#1a1a1a" stroke="#8a8a8a" stroke-width="0.9"/>
<polygon points="69.5,130.3 69.5,137.4 63.5,139.6" fill="#9a9a9a"/>
<polygon points="141.4,177 147.4,186.3 141.4,184.1 135.4,186.3" fill="#1a1a1a" stroke="#8a8a8a" stroke-width="0.9"/>
<polygon points="141.4,177 141.4,184.1 135.4,186.3" fill="#9a9a9a"/>
<polygon points="181,159.3 187,168.6 181,166.4 175,168.6" fill="#1a1a1a" stroke="#8a8a8a" stroke-width="0.9"/>
<polygon points="181,159.3 181,166.4 175,168.6" fill="#9a9a9a"/>
<polygon points="221,201.8 227,211.1 221,208.9 215,211.1" fill="#1a1a1a" stroke="#8a8a8a" stroke-width="0.9"/>
<polygon points="221,201.8 221,208.9 215,211.1" fill="#9a9a9a"/>
<polygon points="301.3,323.5 307.3,332.8 301.3,330.6 295.3,332.8" fill="#1a1a1a" stroke="#8a8a8a" stroke-width="0.9"/>
<polygon points="301.3,323.5 301.3,330.6 295.3,332.8" fill="#9a9a9a"/>
<polygon points="340.8,311.7 346.8,321 340.8,318.8 334.8,321" fill="#1a1a1a" stroke="#8a8a8a" stroke-width="0.9"/>
<polygon points="340.8,311.7 340.8,318.8 334.8,321" fill="#9a9a9a"/>
<polygon points="381,280.2 387,289.5 381,287.3 375,289.5" fill="#1a1a1a" stroke="#8a8a8a" stroke-width="0.9"/>
<polygon points="381,280.2 381,287.3 375,289.5" fill="#9a9a9a"/>
<polygon points="421.5,329.8 427.5,339.1 421.5,336.9 415.5,339.1" fill="#1a1a1a" stroke="#8a8a8a" stroke-width="0.9"/>
<polygon points="421.5,329.8 421.5,336.9 415.5,339.1" fill="#9a9a9a"/>
<polygon points="79,245.2 85,247.9 91,245.2 85,254.8" fill="#1a1a1a" stroke="#8a8a8a" stroke-width="0.9"/>
<polygon points="85,247.9 91,245.2 85,254.8" fill="#9a9a9a"/>
<polygon points="118.6,283.2 124.6,285.9 130.6,283.2 124.6,292.8" fill="#1a1a1a" stroke="#8a8a8a" stroke-width="0.9"/>
<polygon points="124.6,285.9 130.6,283.2 124.6,292.8" fill="#9a9a9a"/>
<polygon points="190.9,314.9 196.9,317.6 202.9,314.9 196.9,324.5" fill="#1a1a1a" stroke="#8a8a8a" stroke-width="0.9"/>
<polygon points="196.9,317.6 202.9,314.9 196.9,324.5" fill="#9a9a9a"/>
<polygon points="262.8,407.7 268.8,410.4 274.8,407.7 268.8,417.3" fill="#1a1a1a" stroke="#8a8a8a" stroke-width="0.9"/>
<polygon points="268.8,410.4 274.8,407.7 268.8,417.3" fill="#9a9a9a"/>
<polygon points="351.5,393.4 357.5,396.1 363.5,393.4 357.5,403" fill="#1a1a1a" stroke="#8a8a8a" stroke-width="0.9"/>
<polygon points="357.5,396.1 363.5,393.4 357.5,403" fill="#9a9a9a"/>
<polygon points="399,510.2 405,512.9 411,510.2 405,519.8" fill="#1a1a1a" stroke="#8a8a8a" stroke-width="0.9"/>
<polygon points="405,512.9 411,510.2 405,519.8" fill="#9a9a9a"/>
<polygon points="454.8,495.9 460.8,498.6 466.8,495.9 460.8,505.5" fill="#1a1a1a" stroke="#8a8a8a" stroke-width="0.9"/>
<polygon points="460.8,498.6 466.8,495.9 460.8,505.5" fill="#9a9a9a"/>
<circle cx="141" cy="260.5" r="6" fill="#00ffff"/>
<circle cx="181" cy="271" r="6" fill="#00ffff"/>
<circle cx="212.7" cy="315.2" r="6" fill="#00ffff"/>
<circle cx="333" cy="382.4" r="6" fill="#00ffff"/>
<circle cx="365" cy="378.6" r="6" fill="#00ffff"/>
<circle cx="420.5" cy="497.5" r="6" fill="#00ffff"/>
<circle cx="468.7" cy="477" r="6" fill="#00ffff"/>
<circle cx="125.5" cy="214" r="6" fill="#ff00ff"/>
<circle cx="173.2" cy="176.7" r="6" fill="#ff00ff"/>
<circle cx="196.8" cy="199" r="6" fill="#ff00ff"/>
<circle cx="229.1" cy="208.8" r="6" fill="#ff00ff"/>
<circle cx="349" cy="324.5" r="6" fill="#ff00ff"/>
<circle cx="397.2" cy="334.5" r="6" fill="#ff00ff"/>
<circle cx="437" cy="378.4" r="6" fill="#ff00ff"/>
</g><g clip-path="url(#cs)">
<line x1="45.5" y1="540" x2="45.5" y2="717" stroke="#3c4650" stroke-dasharray="3 3"/>
<line x1="77.5" y1="540" x2="77.5" y2="717" stroke="#3c4650" stroke-dasharray="3 3"/>
<line x1="109.5" y1="540" x2="109.5" y2="717" stroke="#3c4650" stroke-dasharray="3 3"/>
<line x1="141.5" y1="540" x2="141.5" y2="717" stroke="#3c4650" stroke-dasharray="3 3"/>
<line x1="173.5" y1="540" x2="173.5" y2="717" stroke="#3c4650" stroke-dasharray="3 3"/>
<line x1="205.5" y1="540" x2="205.5" y2="717" stroke="#3c4650" stroke-dasharray="3 3"/>
<line x1="237.5" y1="540" x2="237.5" y2="717" stroke="#3c4650" stroke-dasharray="3 3"/>
<line x1="269.5" y1="540" x2="269.5" y2="717" stroke="#3c4650" stroke-dasharray="3 3"/>
<line x1="301.5" y1="540" x2="301.5" y2="717" stroke="#3c4650" stroke-dasharray="3 3"/>
<line x1="333.5" y1="540" x2="333.5" y2="717" stroke="#3c4650" stroke-dasharray="3 3"/>
<line x1="365.5" y1="540" x2="365.5" y2="717" stroke="#3c4650" stroke-dasharray="3 3"/>
<line x1="397.5" y1="540" x2="397.5" y2="717" stroke="#3c4650" stroke-dasharray="3 3"/>
<line x1="429.5" y1="540" x2="429.5" y2="717" stroke="#3c4650" stroke-dasharray="3 3"/>
<line x1="461.5" y1="540" x2="461.5" y2="717" stroke="#3c4650" stroke-dasharray="3 3"/>
<line x1="493.5" y1="540" x2="493.5" y2="717" stroke="#3c4650" stroke-dasharray="3 3"/>
<line x1="525.5" y1="540" x2="525.5" y2="717" stroke="#3c4650" stroke-dasharray="3 3"/>
<line x1="557.5" y1="540" x2="557.5" y2="717" stroke="#3c4650" stroke-dasharray="3 3"/>
<line x1="589.5" y1="540" x2="589.5" y2="717" stroke="#3c4650" stroke-dasharray="3 3"/>
<line x1="13" y1="629.5" x2="593" y2="629.5" stroke="#5a46b4" stroke-dasharray="4 2"/>
<rect x="13" y="600" width="3" height="29" fill="#8a00ff"/>
<rect x="19" y="599" width="5" height="30" fill="#8a00ff"/>
<rect x="27" y="599" width="5" height="30" fill="#8a00ff"/>
<rect x="35" y="598" width="5" height="31" fill="#8a00ff"/>
<rect x="43" y="586" width="5" height="43" fill="#8a00ff"/>
<rect x="51" y="574" width="5" height="55" fill="#8a00ff"/>
<rect x="59" y="562" width="5" height="67" fill="#8a00ff"/>
<rect x="67" y="550" width="5" height="79" fill="#8a00ff"/>
<rect x="75" y="548" width="5" height="81" fill="#8a00ff"/>
<rect x="83" y="550" width="5" height="79" fill="#ff0000"/>
<rect x="91" y="553" width="5" height="76" fill="#ff0000"/>
<rect x="99" y="557" width="5" height="72" fill="#ff0000"/>
<rect x="107" y="560" width="5" height="69" fill="#ff0000"/>
<rect x="115" y="565" width="5" height="64" fill="#ff0000"/>
<rect x="123" y="576" width="5" height="53" fill="#ff0000"/>
<rect x="131" y="580" width="5" height="49" fill="#ff0000"/>
<rect x="139" y="577" width="5" height="52" fill="#8a00ff"/>
<rect x="147" y="576" width="5" height="53" fill="#8a00ff"/>
<rect x="155" y="575" width="5" height="54" fill="#8a00ff"/>
<rect x="163" y="576" width="5" height="53" fill="#ff0000"/>
<rect x="171" y="584" width="5" height="45" fill="#ff0000"/>
<rect x="179" y="578" width="5" height="51" fill="#8a00ff"/>
<rect x="187" y="585" width="5" height="44" fill="#ff0000"/>
<rect x="195" y="600" width="5" height="29" fill="#ff0000"/>
<rect x="203" y="610" width="5" height="19" fill="#ff0000"/>
<rect x="211" y="608" width="5" height="21" fill="#8a00ff"/>
<rect x="219" y="610" width="5" height="19" fill="#ff0000"/>
<rect x="227" y="628" width="5" height="1" fill="#ff0000"/>
<rect x="235" y="630" width="5" height="1" fill="#ff0000"/>
<rect x="243" y="630" width="5" height="17" fill="#ff0000"/>
<rect x="251" y="630" width="5" height="30" fill="#ff0000"/>
<rect x="259" y="630" width="5" height="42" fill="#ff0000"/>
<rect x="267" y="630" width="5" height="56" fill="#ff0000"/>
<rect x="275" y="630" width="5" height="64" fill="#ff0000"/>
<rect x="283" y="630" width="5" height="65" fill="#ff0000"/>
<rect x="291" y="630" width="5" height="64" fill="#8a00ff"/>
<rect x="299" y="630" width="5" height="64" fill="#8a00ff"/>
<rect x="307" y="630" width="5" height="63" fill="#8a00ff"/>
<rect x="315" y="630" width="5" height="64" fill="#ff0000"/>
<rect x="323" y="630" width="5" height="63" fill="#8a00ff"/>
<rect x="331" y="630" width="5" height="59" fill="#8a00ff"/>
<rect x="339" y="630" width="5" height="54" fill="#8a00ff"/>
<rect x="347" y="630" width="5" height="53" fill="#8a00ff"/>
<rect x="355" y="630" width="5" height="51" fill="#8a00ff"/>
<rect x="363" y="630" width="5" height="48" fill="#8a00ff"/>
<rect x="371" y="630" width="5" height="43" fill="#8a00ff"/>
<rect x="379" y="630" width="5" height="34" fill="#8a00ff"/>
<rect x="387" y="630" width="5" height="34" fill="#8a00ff"/>
<rect x="395" y="630" width="5" height="58" fill="#ff0000"/>
<rect x="403" y="630" width="5" height="69" fill="#ff0000"/>
<rect x="411" y="630" width="5" height="72" fill="#ff0000"/>
<rect x="419" y="630" width="5" height="60" fill="#8a00ff"/>
<rect x="427" y="630" width="5" height="70" fill="#ff0000"/>
<rect x="435" y="630" width="5" height="70" fill="#ff0000"/>
<rect x="443" y="630" width="5" height="73" fill="#ff0000"/>
<rect x="451" y="630" width="5" height="79" fill="#ff0000"/>
<rect x="459" y="630" width="5" height="78" fill="#8a00ff"/>
<rect x="467" y="630" width="5" height="71" fill="#8a00ff"/>
<rect x="475" y="630" width="5" height="62" fill="#8a00ff"/>
<rect x="483" y="630" width="5" height="52" fill="#8a00ff"/>
<polyline points="13,597.9 26.8,599.3 43.6,597.5 54.8,594.1 66,587.6 77.2,580.1 88.4,571.7 99.6,564.3 110.8,559.6 122,558.1 130,558.7 143.7,563.3 158.6,569.3 171.7,574.2 186.6,577.3 199.7,582.6 212.7,588.5 223.9,595 237,603.5 245,610 258.7,626.7 273.6,644.4 284.8,656.5 296,667.7 307.2,678.9 318.4,687.3 329.6,691 344.5,691.6 355.7,688.8 366.2,686.8 379.3,682.6 392.3,677.6 398,677 411,679.8 422.2,681.7 433.4,685.4 444.6,690.1 455.8,696.6 467,700.4 474.4,700.4 482.8,698.5" fill="none" stroke="#00c800" stroke-width="1.0" stroke-linejoin="round" stroke-dasharray="3 3"/>
</g>
<path d="M471 108 L479 108 L475 113 Z" fill="#888"/>
</svg>
<div class="a" style="left:16px;top:115px;width:0;height:0;border-left:3.5px solid transparent;border-right:3.5px solid transparent;border-top:4px solid #fff"></div><div class="a" style="left:28px;top:110px;font-size:9.5px;color:#fff;-webkit-text-stroke:0.25px #fff;white-space:nowrap;line-height:12px">EURUSD,H1&nbsp; 1.3739 1.3743 1.3735 1.3741</div>
<div class="a" style="left:17px;top:541px;font-size:9.4px;color:#fff;-webkit-text-stroke:0.25px #fff;white-space:nowrap;line-height:12px">MACD(12,26,9) -0.00068 0.00000 0.00000 -0.00089 0.00000</div>
<div class="pl" style="top:121px">1.3815</div><div class="tk" style="top:127px"></div>
<div class="pl" style="top:157px">1.3805</div><div class="tk" style="top:163px"></div>
<div class="pl" style="top:192px">1.3795</div><div class="tk" style="top:198px"></div>
<div class="pl" style="top:228px">1.3785</div><div class="tk" style="top:234px"></div>
<div class="pl" style="top:263px">1.3775</div><div class="tk" style="top:269px"></div>
<div class="pl" style="top:299px">1.3765</div><div class="tk" style="top:305px"></div>
<div class="pl" style="top:370px">1.3745</div><div class="tk" style="top:376px"></div>
<div class="pl" style="top:405px">1.3735</div><div class="tk" style="top:411px"></div>
<div class="pl" style="top:441px">1.3725</div><div class="tk" style="top:447px"></div>
<div class="pl" style="top:476px">1.3715</div><div class="tk" style="top:482px"></div>
<div class="pl" style="top:512px">1.3705</div><div class="tk" style="top:518px"></div>
<div class="plb" style="top:285px;background:#00ffff">1.3769</div>
<div class="plb" style="top:336px;background:#00ffff">1.3755</div>
<div class="plb" style="top:384px;background:#ffffff">1.3741</div>
<div class="pl" style="top:539px;left:597px">0.00116</div><div class="tk" style="top:545px"></div>
<div class="pl" style="top:623px;left:597px">0.00</div><div class="tk" style="top:629px"></div>
<div class="pl" style="top:705px;left:597px">-0.00114</div><div class="tk" style="top:711px"></div>
<div class="dl" style="left:13px">11 Dec 2013</div><div class="dtk" style="left:13px"></div>
<div class="dl" style="left:77px">11 Dec 20:00</div><div class="dtk" style="left:77px"></div>
<div class="dl" style="left:141px">12 Dec 04:00</div><div class="dtk" style="left:141px"></div>
<div class="dl" style="left:205px">12 Dec 12:00</div><div class="dtk" style="left:205px"></div>
<div class="dl" style="left:269px">12 Dec 20:00</div><div class="dtk" style="left:269px"></div>
<div class="dl" style="left:333px">13 Dec 04:00</div><div class="dtk" style="left:333px"></div>
<div class="dl" style="left:397px">13 Dec 12:00</div><div class="dtk" style="left:397px"></div>
<div class="dl" style="left:461px">13 Dec 20:00</div><div class="dtk" style="left:461px"></div>
<!-- tab bar -->
<div class="a" style="left:8px;top:735px;width:627px;height:2px;background:#fafafa"></div>
<div class="a" style="left:8px;top:737px;width:627px;height:20px;background:#f0f0f0;border-top:1px solid #d0d0d0;border-left:2px solid #a8a8a8;border-bottom:1px solid #fafafa"></div>
<div class="a" style="left:172px;top:737px;width:463px;height:1px;background:#000"></div>
<div class="a tab" style="left:22px;color:#6c7898">USDCHF,H1</div>
<div class="a" style="left:92px;top:742px;width:1px;height:11px;background:#555"></div>
<div class="a tab" style="left:102px;color:#6c7898">EURNZD,H1</div>
<div class="a" style="left:172px;top:737px;width:81px;height:19px;background:#fff;border:1px solid #000;border-top:none"></div>
<div class="a tab" style="left:182px;color:#000">EURUSD,H1</div>
<div class="a" style="left:607px;top:744px;width:0;height:0;border-top:4px solid transparent;border-bottom:4px solid transparent;border-right:4px solid #aaa"></div>
<div class="a" style="left:622px;top:744px;width:0;height:0;border-top:4px solid transparent;border-bottom:4px solid transparent;border-left:4px solid #aaa"></div>
<!-- status bar -->
<div class="a" style="left:8px;top:757px;width:627px;height:13px;background:#f0f0f0"></div
><div class="a" style="left:25px;top:761px;width:1px;height:9px;background:#a0a0a0"></div><div class="a" style="left:127px;top:761px;width:1px;height:9px;background:#a0a0a0"></div><div class="a" style="left:199px;top:761px;width:1px;height:9px;background:#a0a0a0"></div><div class="a" style="left:268px;top:761px;width:1px;height:9px;background:#a0a0a0"></div><div class="a" style="left:339px;top:761px;width:1px;height:9px;background:#a0a0a0"></div><div class="a" style="left:408px;top:761px;width:1px;height:9px;background:#a0a0a0"></div><div class="a" style="left:473px;top:761px;width:1px;height:9px;background:#a0a0a0"></div>
<div class="a" style="left:11px;top:764px;font-size:12px;color:#141850;line-height:12px">De</div>
<div class="a" style="left:479px;top:763px;width:24px;height:7px;background:repeating-linear-gradient(90deg,#6a8a10 0 2px,transparent 2px 3px)"></div>
<div class="a" style="left:541px;top:763px;font-size:11px;color:#000;line-height:12px">33/2 kb</div>
<!-- taskbar -->
<div class="a" style="left:0;top:769px;width:643px;height:17px;background:linear-gradient(180deg,#1a1a1a 0,#1a1a1a 1px,#6a6a6a 1px,#555252 3px,#454040 45%,#383030 100%)"></div>
<div class="a" style="left:0;top:770px;width:59px;height:16px;background:linear-gradient(180deg,#d0d0d0,#b4b4b4 50%,#9c9c9c);border-right:1px solid #4a4a4a;border-top:1px solid #e8e8e8"></div>
<div class="a" style="left:-2px;top:777px;font-size:12.5px;color:#111;line-height:15px">aTrader</div>
<div class="a" style="left:474px;top:777px;font-size:12px;color:#fff;line-height:13px">EN</div>
<div class="a" style="left:497px;top:779px;width:15px;height:8px;border:1px solid #ddd;background:repeating-linear-gradient(90deg,#999 0 1px,#555 1px 3px)"></div><svg class="a" style="left:500px;top:773px" width="12" height="7"><path d="M1 6 Q3 1 11 1" stroke="#ccc" fill="none"/></svg>
<div class="a" style="left:524px;top:781px;width:0;height:0;border-left:4px solid transparent;border-right:4px solid transparent;border-bottom:5px solid #fff"></div>
<div class="a" style="left:546px;top:775px;width:8px;height:11px;background:linear-gradient(90deg,#888,#ccc,#888)"></div>
<div class="a" style="left:551px;top:781px;width:9px;height:9px;border-radius:50%;background:#2a2"></div>
<div class="a" style="left:592px;top:777px;font-size:12px;color:#fff;line-height:13px">12:32</div>
</body></html>
